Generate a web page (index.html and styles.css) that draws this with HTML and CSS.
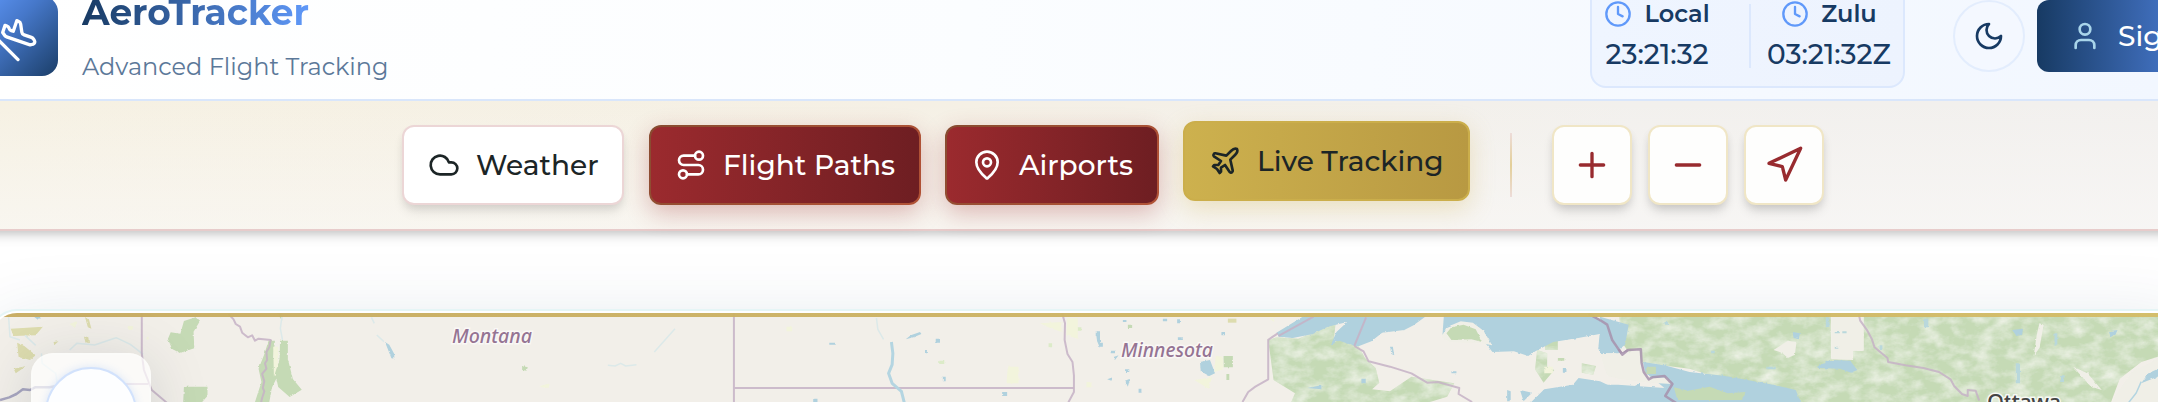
FILE: index.html
```html
<!DOCTYPE html>
<html lang="en">
<head>
<meta charset="utf-8">
<title>AeroTracker</title>
<link rel="stylesheet" href="styles.css">
</head>
<body>
<header class="header">
  <div class="brand">
    <div class="logo"><svg class="icon logo-icon" viewBox="0 0 24 24"><path d="M2 22h20"/><path d="M6.36 17.4 4 17l-2-4 1.1-.55a2 2 0 0 1 1.8 0l.17.1a2 2 0 0 0 1.8 0L8 12 5 6l.9-.45a2 2 0 0 1 2.09.2l4.02 3a2 2 0 0 0 2.1.2l4.19-2.06a2.41 2.41 0 0 1 1.73-.17L21 7a1.4 1.4 0 0 1 .87 1.99l-.38.76c-.23.46-.6.84-1.07 1.08L7.58 17.2a2 2 0 0 1-1.22.18Z"/></svg></div>
    <div class="brand-text">
      <h1 class="title">AeroTracker</h1>
      <p class="subtitle">Advanced Flight Tracking</p>
    </div>
  </div>
  <div class="clocks">
    <div class="clock clock-local">
      <div class="clock-label"><svg class="icon" viewBox="0 0 24 24"><circle cx="12" cy="12" r="10"/><path d="M12 6v6l4 2"/></svg><span>Local</span></div>
      <div class="clock-time">23:21:32</div>
    </div>
    <div class="clock-divider"></div>
    <div class="clock clock-zulu">
      <div class="clock-label"><svg class="icon" viewBox="0 0 24 24"><circle cx="12" cy="12" r="10"/><path d="M12 6v6l4 2"/></svg><span>Zulu</span></div>
      <div class="clock-time">03:21:32Z</div>
    </div>
  </div>
  <button class="theme"><svg class="icon" viewBox="0 0 24 24"><path d="M12 3a6 6 0 0 0 9 9 9 9 0 1 1-9-9Z"/></svg></button>
  <button class="signin"><svg class="icon" viewBox="0 0 24 24"><path d="M19 21v-2a4 4 0 0 0-4-4H9a4 4 0 0 0-4 4v2"/><circle cx="12" cy="7" r="4"/></svg><span>Sign In</span></button>
</header>

<nav class="toolbar">
  <button class="tool weather"><svg class="icon" viewBox="0 0 24 24"><path d="M17.5 19H9a7 7 0 1 1 6.71-9h1.79a4.5 4.5 0 1 1 0 9Z"/></svg><span>Weather</span></button>
  <button class="tool red paths"><svg class="icon" viewBox="0 0 24 24"><circle cx="6" cy="19" r="3"/><path d="M9 19h8.5a3.5 3.5 0 0 0 0-7h-11a3.5 3.5 0 0 1 0-7H15"/><circle cx="18" cy="5" r="3"/></svg><span>Flight Paths</span></button>
  <button class="tool red airports"><svg class="icon" viewBox="0 0 24 24"><path d="M20 10c0 4.993-5.539 10.193-7.399 11.799a1 1 0 0 1-1.202 0C9.539 20.193 4 14.993 4 10a8 8 0 0 1 16 0"/><circle cx="12" cy="10" r="3"/></svg><span>Airports</span></button>
  <button class="tool gold live"><svg class="icon" viewBox="0 0 24 24"><path d="M17.8 19.2 16 11l3.5-3.5C21 6 21.5 4 21 3c-1-.5-3 0-4.5 1.5L13 8 4.8 6.2c-.5-.1-.9.1-1.1.5l-.3.5c-.2.5-.1 1 .3 1.3L9 12l-2 3H4l-1 1 3 2 2 3 1-1v-3l3-2 3.5 5.3c.3.4.8.5 1.3.3l.5-.2c.4-.3.6-.7.5-1.2z"/></svg><span>Live Tracking</span></button>
  <div class="tool-divider"></div>
  <div class="zoom-group">
    <button class="square"><svg class="icon" viewBox="0 0 24 24"><path d="M5 12h14M12 5v14"/></svg></button>
    <button class="square"><svg class="icon" viewBox="0 0 24 24"><path d="M5 12h14"/></svg></button>
    <button class="square"><svg class="icon" viewBox="0 0 24 24"><path d="M3 11 22 2 13 21 11 13 3 11z"/></svg></button>
  </div>
</nav>

<main class="stage">
  <section class="map">
    <svg class="tiles" viewBox="0 313 2158 89" width="2158" height="89">
      <defs>
        <filter id="forest" x="0" y="0" width="100%" height="100%">
          <feTurbulence type="fractalNoise" baseFrequency="0.02 0.028" numOctaves="4" seed="8" result="n"/>
          <feColorMatrix in="n" type="matrix" values="0 0 0 0 .9  0 0 0 0 .92  0 0 0 0 .85  1.5 0 0 0 -.55" result="m"/>
          <feComposite in="m" in2="SourceGraphic" operator="in" result="p"/>
          <feMerge><feMergeNode in="SourceGraphic"/><feMergeNode in="p"/></feMerge>
        </filter>
        <filter id="rough" x="-5%" y="-5%" width="110%" height="110%">
          <feTurbulence type="fractalNoise" baseFrequency="0.09" numOctaves="3" seed="3" result="n"/>
          <feDisplacementMap in="SourceGraphic" in2="n" scale="7" xChannelSelector="R" yChannelSelector="G" result="d"/>
          <feGaussianBlur in="d" stdDeviation="1"/>
        </filter>
      </defs>
      <rect y="313" width="2158" height="89" fill="#f2efe9"/>

      <!-- Pacific Northwest and Montana -->
      <g transform="translate(0 220) scale(.35714 .33333)">
        <g filter="url(#rough)">
          <path class="wood" d="M515 303l35-12 10 12-18 32 2 50-40 14-22-12-12-30 8-20 27 4z"/>
          <path class="wood" d="M515 500h66v28l-15 18h-53zM752 362h18l-5 50 15 50-18 40-8 44h-40l18-60-8-40 15-40zM784 362h22v55l14 60 25 32-34 22-32-30-8-40 12-45zM1462 438l16 4-4 10-12-2zM776 280h14v22z"/>
          <path class="field" d="M30 326l90-6-20 26-62 2zM48 368l20 10 32 28-16 14-32-10zM238 292l10 2 8 32-10-4zM235 350h12l2 20-10-4zM150 366l14-2-12 12zM38 446l36-8-30 22z"/>
          <path class="pale" d="M765 380h14v50l-12 40zM195 312l20-8-5 20zM360 318h10v12h-10zM410 350h6v10h-6zM1510 500l30-10-10 14z"/>
          <path class="lake" d="M95 290h20l-8 10zM1078 366l12 8 14 28v14l-8-1z"/>
        </g>
        <path class="creek" d="M24 290l4 60 28 10M70 346l30 30M116 400l2 30 38 30 4 30M195 390l20-20 50 5 60-22 40 20 36 30M1040 292l8 18M1055 345l20 20M790 285l-5 40 6 35"/>
        <path class="border-line" d="M397 280v120l6 50 22 60 42 38M302 492H415"/>
        <path class="border-line" d="M640 282l14 16 6 14 12 8 6 18 16 14 12-6 8 16 10-6 34 4-4 22-8 14 2 24-6 10 4 16-12 16 6 22-4 20 4 10-6 20-4 18"/>
        <path class="border-blue" d="M0 540l26-8 20-10 18-14 20 2 14-8h40l20-4"/>
      </g>

      <!-- Dakotas -->
      <g transform="translate(540 300) scale(.35714 .33333)">
        <path class="border-line" d="M543 38v270M543 264H1494"/>
        <path class="border-line" d="M1462 40l8 30-1 50 8 42 14 24 4 40v50l-16 32"/>
        <path class="river" d="M984 126l4 34-2 34-10 26 10 30 26 24 8 34"/>
        <path class="creek" d="M942 54l4 34 16 30M378 86l-58 70M190 196l20 2 16-8 14 8 30-4"/>
        <g filter="url(#rough)">
          <path class="lake" d="M810 128h18v6h-18zM1024 118l14-12 26-10 4 6-22 10zM1108 116h12v12h-12zM1078 150h8v10h-8zM1128 230h8v14h-8zM1294 276h14v12h-14zM765 296h12v10h-12zM1556 94h12v50l-8-20z"/>
          <path class="pale" d="M1400 70l60-4v30l-40-16zM1476 54h30v62l-32-10zM1310 200h30v50h-34zM690 80h16v14h-16zM0 258l28-8-4 14zM1530 246h14v16h-14z"/>
          <path class="wood light" d="M1506 82h10v10h-10zM1118 182h14v10h-14zM1424 130h10v12h-10z"/>
        </g>
      </g>

      <!-- Minnesota, Wisconsin and Lake Superior -->
      <g transform="translate(1080 300) scale(.35714 .33333)">
        <g filter="url(#forest)">
          <path class="wood" d="M527 120l24-8 60 4 60-26 45-24-6 60 30-10 38 18 20 40 30 30 10 44-20 20 50 6 60-44 120 20-20 40-60 20H590l12-30-60-40z"/>
          <path class="wood" d="M1280 150l28 10v40l20 10-30 38-24-40zM1302 120h36v30h-36zM1405 190l40 8-8 26-32-6zM1510 52h58v102l-50-30z"/>
        </g>
        <g filter="url(#rough)">
          <path class="lake" d="M556 110l-6-12 92-60h340l-48 38-26 14-62 8-30 26-40 16-50-18-24 14 16-40 30-30-54 14-42 22-56 12z"/>
          <path class="lake" d="M1015 104l4-60 20-6h392l44 34 16 50 24 30-8 10-56-14 4-46-60 12-70 12-50 28-20 14-40-14-60 2-30-40-30-32-40-12z"/>
          <path class="lake" d="M1260 310l40-42 80-14 16-20 60 10 40 20 32 8 40-22v60z"/>
          <path class="lake" d="M336 186l28-6 14 40-16 8-24-14zM274 112h14v8h-14zM396 96h10v10h-10zM232 56h12v8h-12zM272 58h8v12h-8zM44 98h8v10h-8zM54 128h10v12h-10zM76 238l16-6-4 10zM126 242l14-6-6 24zM164 266h8v12h-8zM126 208h12v8h-12zM92 172l16-6-10 14zM86 152h12v8h-12zM868 140h8l4 26-8-4zM1352 204h10v14h-10zM1196 270l10 4v30h-10zM1232 270l34 8-24 26zM1040 214h14v6h-14zM636 264l40-8v12zM788 236h12v14h-12zM120 60h10v6h-10z"/>
          <path class="land" d="M1012 112l14-30 40-18 34 4 30 24 24 44-28-6-90-4z"/>
          <path class="wood" d="M1026 100l14-18 34-8 34 14 18 38-30-8-56 2zM402 168h26v34h-26zM410 222h8v18h-8zM134 74h12v10h-12zM1338 174h18v8h-18z"/>
          <path class="pale" d="M380 168l20 2 2 38-26 8zM320 240l50-8-10 34zM530 56l14-4v14zM1300 200h24v20h-24z"/>
          <path class="field" d="M414 56h24v12h-24z"/>
        </g>
        <path class="border-line" d="M526 120l28-20M527 118v120l-36 22-20 16-16 30M654 50L556 108M801 52L768 138M768 138l26 16 14 30 60 16 60 20 44 28 30-2 60 18-2 18 38 24"/>
        <path class="border-dark" d="M1424 42l52 30 12 46 30 44 16-12 36-2"/>
      </g>

      <!-- Ontario and Quebec -->
      <g transform="translate(1600 300) scale(.35842 .33333)">
        <g filter="url(#forest)">
          <path class="wood" d="M60 38H644V176H706V152H736V38H1570V166l-60 20-60 50-24 70H540L250 206 100 186l-40-60z"/>
        </g>
        <g filter="url(#rough)">
          <path class="lake" d="M0 50l80 24-10 60-30 26H0zM120 186l60 10 70 20 100 12 80 16 60 12 56 14 16 40H0v-56l50 0 130 10-30-26-24-20zM606 200l36-20 56 2 20 28-18 8-30-12-60-2zM538 96l20 4-4 18-14-4zM1150 90l30-4-2 18-16 4zM1420 94l24-4-6 14-14 6z"/>
          <path class="land" d="M646 40h88v112h-28v28l-60-2zM0 160h60l50-14 6 50 20 40 50-4 14 20-60-4-80-10-40-10zM484 150l40-28 24 4-4 38-20 10-16-16zM1580 150l-36 34-60 30-50 80-4 16h150zM1226 70l12 4-12 70-16 24 8-60zM1320 200l40 20 40 50-30-10z"/>
          <path class="lake" d="M1570 200l-40 20-20 30 60-26z"/>
          <path class="wood" d="M130 200h26v22h-30zM206 262l40 10 60-12 50 20 50-4-10 24H216z"/>
          <path class="creek-fill" d="M655 96h14v4h-14zM676 94h12v6h-12zM655 140h10v6h-10zM180 66h10v8h-10zM310 152h10v8h-10zM464 200h26v8h-26zM904 56h12v26h-12zM780 136h8v14h-8zM1268 100h8v34h-8zM630 52h10v30h-10zM1160 190h12v60h-12zM1284 226h12v20h-12z"/>
        </g>
        <path class="river thin" d="M1510 245l-14 34-22 30"/>
        <path class="border-line" d="M722 42l4 20 20 30 12 24 8 26 36 32 2 12 48 10 50 8 44 12 32 22 10 20 22 24 16 6v-18l22 2 10 30"/>
        <path class="border-dark" d="M0 60l20 14 14 46 28 44 16-14 36-2 2 40 6 28 14 22 10-6 34-4 22 24-20 36 32 22"/>
      </g>

      <g class="state-label">
        <text x="452" y="343" textLength="80" lengthAdjust="spacingAndGlyphs">Montana</text>
        <text x="1121" y="357" textLength="92" lengthAdjust="spacingAndGlyphs">Minnesota</text>
      </g>
      <text class="city-label" x="1987" y="410" textLength="74">Ottawa</text>
    </svg>
    <div class="map-accent"></div>
    <div class="glass"><div class="dial"></div></div>
  </section>
</main>
</body>
</html>
```
FILE: styles.css
```css
* { box-sizing: border-box; }
body {
  margin: 0;
  width: 2158px;
  height: 402px;
  overflow: hidden;
  background: #fff;
  font-family: Montserrat, Inter, sans-serif;
}
button { font: inherit; padding: 0; margin: 0; border: 0; display: flex; align-items: center; justify-content: center; }
.icon { flex: none; width: 32px; height: 32px; fill: none; stroke: currentColor; stroke-width: 2; stroke-linecap: round; stroke-linejoin: round; }

/* Header */
.header {
  position: relative;
  z-index: 2;
  display: flex;
  align-items: flex-start;
  height: 101px;
  overflow: hidden;
  border-bottom: 2px solid #d9e6fb;
  background: linear-gradient(90deg, #fff 0%, #fbfdff 45%, #f2f7ff 100%);
}
.brand { display: flex; gap: 24px; flex: none; width: 1590px; margin-left: -22px; margin-right: 22px; }
.logo {
  flex: none; width: 80px; height: 80px; margin-top: -4px; border-radius: 16px;
  display: flex; align-items: center; justify-content: center; color: #fff;
  background: linear-gradient(135deg, #5f98f8, #4678ca 40%, #1b3e68);
}
.logo-icon { width: 40px; height: 40px; transform: rotate(45deg); }
.title {
  margin: -12px 0 0; width: 228px; height: 50px; line-height: 48px; font-size: 36px; font-weight: 700;
  background: linear-gradient(90deg, #173a63, #6099fa);
  -webkit-background-clip: text; background-clip: text; color: transparent; white-space: nowrap;
}
.subtitle { margin: 13px 0 0; line-height: 32px; font-size: 24px; color: #5b7899; white-space: nowrap; }
.clocks {
  flex: none; display: flex; width: 315px; height: 108px; margin-top: -20px; padding: 18px 11px 0 13px;
  border: 2px solid #dce8fd; border-radius: 16px; background: linear-gradient(90deg, #eff5ff, #edf3fe);
  color: #173a63;
}
.clock { display: flex; flex-direction: column; align-items: center; }
.clock-local { width: 104px; }
.clock-zulu { width: 124px; }
.clock-label { display: flex; align-items: center; gap: 12px; height: 28px; font-size: 24px; font-weight: 600; }
.clock-label span { padding-bottom: 2px; }
.clock-label .icon { width: 28px; height: 28px; color: #6099fa; }
.clock-time { margin-top: 8px; height: 34px; line-height: 36px; font-size: 28px; font-weight: 500; white-space: nowrap; }
.clock-divider { width: 2px; height: 64px; margin: 4px 16px 0 40px; background: #dce8fd; }
.theme { flex: none; width: 72px; height: 72px; margin-left: 48px; border: 2px solid #e3edfd; border-radius: 50%; background: #f4f8ff; color: #173a63; }
.theme .icon, .signin .icon { width: 32px; height: 32px; }
.signin {
  flex: none; width: 228px; height: 72px; margin-left: 12px; padding-left: 32px; gap: 17px; justify-content: flex-start;
  border-radius: 12px; color: #fff; font-size: 28px; font-weight: 500; white-space: nowrap;
  background: linear-gradient(90deg, #173a63, #4474c6 60%, #6099fa);
}
.signin .icon { color: #a9d5ea; }

/* Toolbar */
.toolbar {
  position: relative;
  display: flex; justify-content: flex-start; height: 130px; margin: 0 -24px; padding: 24px 0 24px 426px;
  border-bottom: 2px solid #e7cccb;
  background: linear-gradient(180deg, rgba(255,255,255,0) 0%, rgba(250,249,248,.6) 100%), linear-gradient(90deg, #f6f1e3 0%, #f5f0e5 45%, #f2f0ed 75%, #f2f0ee 100%);
  box-shadow: 0 5px 12px rgba(0,0,0,.12), 0 2px 8px rgba(0,0,0,.13);
}
.tool {
  flex: none; height: 80px; margin-right: 24px; border: 2px solid; border-radius: 12px;
  justify-content: flex-start; gap: 16px; padding-left: 24px; font-size: 28px; font-weight: 500; white-space: nowrap;
}
.weather { width: 222px; margin-right: 25px; background: #fff; border-color: #ecd6d6; color: #1c2526; box-shadow: 0 8px 12px -2px rgba(0,0,0,.1), 0 4px 8px -2px rgba(0,0,0,.08); }
.red { color: #fff; background: linear-gradient(90deg, #9b2a2e, #6e1e22) padding-box, linear-gradient(135deg, #874b30, #b05236 85%) border-box; border-color: transparent; box-shadow: 0 8px 24px rgba(155,42,46,.3); }
.paths { width: 272px; }
.airports { width: 214px; }
.gold { width: 287px; margin-right: 40px; color: #1c2526; background: linear-gradient(90deg, #cdb14e, #b89942); border-color: #cbae4b; box-shadow: 0 8px 24px rgba(205,177,78,.3); transform: translateY(-4px); }
.tool-divider { width: 2px; height: 64px; margin: 8px 40px 0 0; background: linear-gradient(#eddcd9, #e3cf98 50%, #eddcd9); }
.zoom-group { display: flex; gap: 16px; }
.square { width: 80px; height: 80px; border: 2px solid #f0e6c6; border-radius: 12px; background: #fefefd; color: #982b2f; box-shadow: 0 8px 12px -2px rgba(0,0,0,.12), 0 4px 8px -2px rgba(0,0,0,.1); }
.square .icon { width: 40px; height: 40px; }

/* Map */
.stage { padding-top: 82px; height: 171px; overflow: hidden; }
.map {
  position: relative; width: 2200px; height: 400px; margin-left: -7px; padding-left: 7px; border-radius: 24px; overflow: hidden;
  background: #f2efe9;
  box-shadow: 0 0 0 2px #fff, 0 0 0 4px #e5f5f6, 0 16px 80px rgba(23,58,99,.15);
}
.tiles { display: block; }
.map-accent { position: absolute; left: 0; right: 0; top: 0; height: 4px; background: linear-gradient(90deg, #c7ab60, #d4bd68); opacity: .96; }
.wood { fill: #c5dab5; }
.light { fill: #dcebc8; }
.lake { fill: #b0d1de; }
.field { fill: #dddcae; }
.pale { fill: #f2f4dc; }
.land { fill: #f0efe7; }
.creek-fill { fill: #b9d8dc; }
.creek, .river, .border-line, .border-dark, .border-blue { fill: none; stroke-linejoin: round; vector-effect: non-scaling-stroke; }
.creek { stroke: #dce9e9; stroke-width: 1.5; }
.river { stroke: #b4d5e1; stroke-width: 3; }
.thin { stroke-width: 1.5; }
.border-line { stroke: #c6b1c5; stroke-width: 2; stroke-opacity: .85; }
.border-dark { stroke: #a792ad; stroke-width: 2.5; stroke-opacity: .85; }
.border-blue { stroke: #a8a6bf; stroke-width: 2.5; }
.state-label { font: italic 500 20.5px "Noto Sans", sans-serif; fill: #957493; stroke: #faf8f6; stroke-width: 3; paint-order: stroke; }
.city-label { font: 500 22px "Noto Sans", sans-serif; fill: #444; stroke: #f7f9f4; stroke-width: 3; paint-order: stroke; }
.glass {
  position: absolute; left: 38px; top: 40px; width: 120px; height: 300px; padding: 14px; border-radius: 22px;
  background: rgba(255,255,255,.68); box-shadow: 0 8px 60px rgba(23,43,70,.15), inset 0 0 0 2px rgba(255,255,255,.2);
}
.dial { width: 92px; height: 92px; border-radius: 50%; border: 2px solid #d2e2fc; background: #fdfeff; box-shadow: 0 0 8px rgba(96,153,250,.2); }
```
